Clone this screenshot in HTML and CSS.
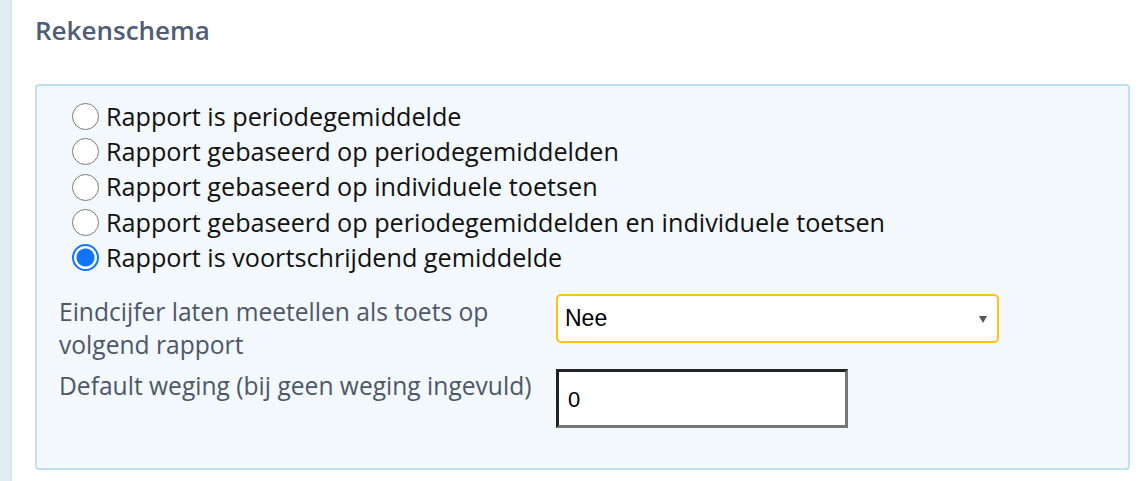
FILE: index.html
```html
<!DOCTYPE html>
<html lang="nl">
<head>
<meta charset="utf-8">
<title>Rekenschema</title>
<link rel="stylesheet" href="styles.css">
</head>
<body>
<div class="page">
  <div class="rail"></div>
  <main class="content">
    <h2 class="title">Rekenschema</h2>
    <section class="panel">
      <div class="options">
        <label class="option"><input type="radio" name="schema"><span>Rapport is periodegemiddelde</span></label>
        <label class="option"><input type="radio" name="schema"><span>Rapport gebaseerd op periodegemiddelden</span></label>
        <label class="option"><input type="radio" name="schema"><span>Rapport gebaseerd op individuele toetsen</span></label>
        <label class="option"><input type="radio" name="schema"><span>Rapport gebaseerd op periodegemiddelden en individuele toetsen</span></label>
        <label class="option"><input type="radio" name="schema" checked><span>Rapport is voortschrijdend gemiddelde</span></label>
      </div>
      <div class="fields">
        <div class="field-label">Eindcijfer laten meetellen als toets op volgend rapport</div>
        <div class="select-box"><span class="select-value">Nee</span><span class="select-arrow"></span></div>
        <div class="field-label second">Default weging (bij geen weging ingevuld)</div>
        <div class="input-wrap"><input class="text-input" type="text" value="0"></div>
      </div>
    </section>
  </main>
</div>
</body>
</html>
```

FILE: styles.css
```css
html, body {
  margin: 0;
  padding: 0;
  background: #ffffff;
}

.page {
  display: flex;
  min-height: 481px;
  font-family: "Open Sans", "Liberation Sans", sans-serif;
}

.rail {
  width: 10px;
  flex: 0 0 10px;
  background: #e2ebef;
  border-right: 2px solid #d4e4eb;
}

.content {
  flex: 1;
  padding: 0 14px 0 23px;
}

.title {
  margin: 12px 0 0 0;
  font-size: 26px;
  line-height: 36px;
  font-weight: 600;
  color: #4f5d76;
  letter-spacing: 0;
}

.panel {
  margin-top: 36px;
  width: 1095px;
  height: 386px;
  box-sizing: border-box;
  border: 2px solid #bfe1ef;
  border-radius: 4px;
  background: #f2f8fc;
  padding: 12px 0 0 35px;
}

.options {
  display: flex;
  flex-direction: column;
}

.option {
  display: flex;
  align-items: center;
  height: 35.3px;
  font-size: 25.2px;
  color: #111111;
}

.option input {
  appearance: none;
  -webkit-appearance: none;
  width: 27px;
  height: 27px;
  margin: 2px 7px 0 0;
  border: 1px solid #7a7a7a;
  border-radius: 50%;
  background: #ffffff;
  box-sizing: border-box;
  flex: 0 0 auto;
}

.option input:checked {
  border: 2px solid #0f75ff;
  background: radial-gradient(circle, #0f75ff 0 8.5px, #ffffff 9.5px);
}

.fields {
  display: grid;
  grid-template-columns: 497px 443px;
  column-gap: 0;
  margin-top: 21px;
  margin-left: -13px;
}

.field-label {
  font-size: 24.6px;
  line-height: 33px;
  color: #4e5768;
  padding-right: 10px;
}

.field-label.second {
  margin-top: 8px;
}

.select-box {
  position: relative;
  height: 49px;
  box-sizing: border-box;
  border: 2px solid #ffc20e;
  border-radius: 5px;
  background: #ffffff;
  display: flex;
  align-items: center;
  padding-left: 7px;
  margin-top: -1px;
}

.select-value {
  font-family: "Liberation Sans", Arial, sans-serif;
  font-size: 23px;
  color: #000000;
}

.select-arrow {
  position: absolute;
  right: 10px;
  top: 20px;
  width: 0;
  height: 0;
  border-left: 4px solid transparent;
  border-right: 4px solid transparent;
  border-top: 7px solid #555555;
}

.input-wrap {
  margin-top: 8px;
}

.text-input {
  width: 292px;
  height: 59px;
  box-sizing: border-box;
  border-width: 3px;
  border-style: solid;
  border-color: #222222 #777777 #777777 #222222;
  background: #ffffff;
  font-family: "Liberation Sans", Arial, sans-serif;
  font-size: 22px;
  color: #000000;
  padding: 2px 9px 0 9px;
  margin: 0;
  outline: none;
}
```
